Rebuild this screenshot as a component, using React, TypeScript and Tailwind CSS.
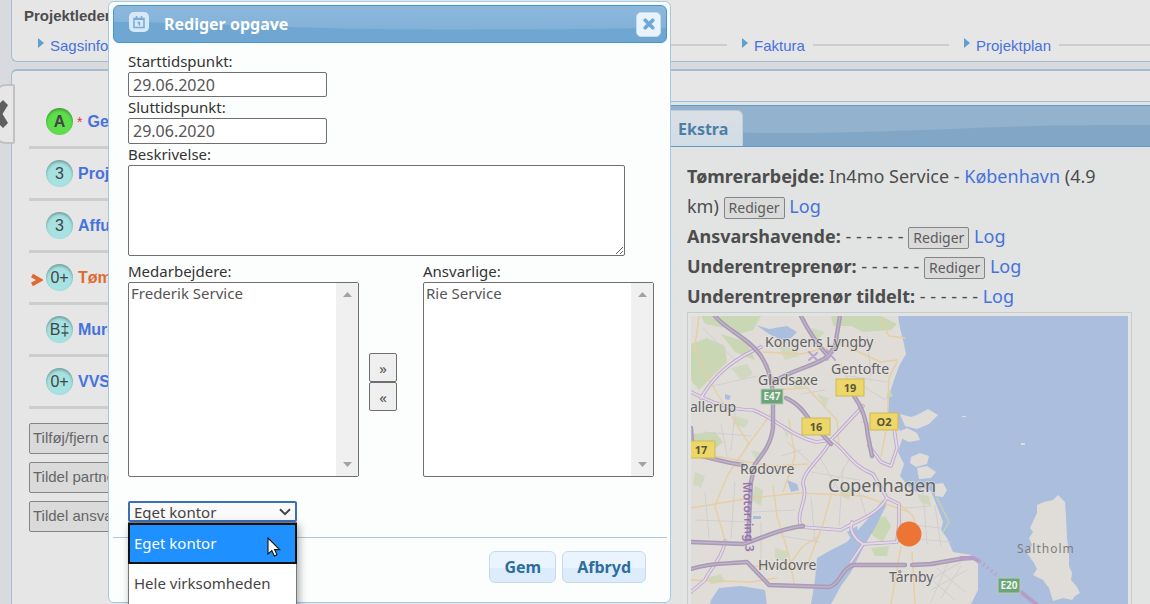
import { useState } from 'react'

const tasks = [
  { code: 'A', name: 'Ge', required: true, done: true },
  { code: '3', name: 'Proj' },
  { code: '3', name: 'Affu' },
  { code: '0+', name: 'Tøm', active: true },
  { code: 'B‡', name: 'Mure' },
  { code: '0+', name: 'VVS' },
]

const sideActions = ['Tilføj/fjern o', 'Tildel partne', 'Tildel ansva']

const details = [
  { label: 'Ansvarshavende:', editable: true },
  { label: 'Underentreprenør:', editable: true },
  { label: 'Underentreprenør tildelt:', editable: false },
]

function NavItem({ label, className }: { label: string; className: string }) {
  return (
    <li className={`flex h-5 items-center ${className}`}>
      <svg className="mb-1 h-[10px] w-[6px] shrink-0" viewBox="0 0 6 10">
        <path d="M0 0 L6 5 L0 10 Z" fill="#5f9fd0" />
      </svg>
      <a href="#" className="ml-1.5 mr-2 pt-0.5 text-[15px] leading-5 text-[#4672dd]">{label}</a>
      <span className="h-[2px] flex-1 bg-[#cccdcd]" />
    </li>
  )
}

function EditButton() {
  return (
    <button className="h-[22px] rounded-[2px] border border-[#858585] bg-[#dadada] px-1 align-baseline text-sm leading-5 text-[#5c5c5c]">
      Rediger
    </button>
  )
}

function ListBox({ id, label, items }: { id: string; label: string; items: string[] }) {
  return (
    <div className="w-[231px] shrink-0">
      <label htmlFor={id} className="block leading-[21px]">{label}</label>
      <div className="flex h-[195px] rounded-[2px] border border-[#6f6f6f] bg-white">
        <select id={id} multiple className="min-w-0 flex-1 appearance-none overflow-hidden px-px text-[#555] outline-none">
          {items.map((item) => (
            <option key={item} className="p-0 px-px leading-5">{item}</option>
          ))}
        </select>
        <div className="flex w-[22px] flex-col items-center justify-between bg-[#f0f0f0] py-[9px]">
          <svg className="h-[5px] w-[9px]" viewBox="0 0 9 5"><path d="M0 5 L4.5 0 L9 5 Z" fill="#a3a3a3" /></svg>
          <svg className="h-[5px] w-[9px]" viewBox="0 0 9 5"><path d="M0 0 L4.5 5 L9 0 Z" fill="#a3a3a3" /></svg>
        </div>
      </div>
    </div>
  )
}

const motorways = [
  'M24 0 C35 14 58 22 70 40 C79 54 82 68 82 84 L82 112 C80 128 72 138 64 148 L60 166 L57 226',
  'M110 0 C118 16 128 30 137 40 C126 50 104 52 82 66',
  'M149 0 L144 30 L137 40',
  'M95 82 C108 88 114 97 120 106 L140 128',
  'M0 112 L2 138 C20 142 35 147 52 149',
  'M163 80 C172 92 176 108 177 120 L181 140',
  'M0 226 L52 228 C72 222 90 212 112 210',
  'M0 253 C20 246 40 248 56 246 L78 269 L138 271 C150 268 150 252 163 249 L214 249',
  'M221 249 L240 248 C254 246 268 242 281 242',
]

const primaryRoads = [
  'M70 31 C45 42 25 56 10 82 M0 76 C18 85 38 94 62 94 C84 102 100 120 125 126 L140 124 L172 90',
  'M140 124 C132 142 112 154 112 168 C118 184 104 196 110 211 L150 214 C162 206 186 200 196 182 L182 158 C160 150 154 132 140 124',
  'M196 182 L208 188 L208 206 L206 226 L172 228 C162 222 158 212 161 206',
  'M203 112 L206 132 L200 150 L190 146 L178 130',
  'M172 228 L160 246 M34 225 C32 242 18 254 14 264 L0 276',
]

const localRoads = [
  'M8 0 L4 30 L14 58 L34 90 L58 128 L36 160 L24 190 L34 224',
  'M0 192 L60 182 L108 177 L172 180 L218 196',
  'M70 36 L110 38 L150 28 L190 46 L206 44',
  'M188 0 L198 20 L214 22 M206 46 L198 62 L196 110 L190 140',
  'M80 74 L116 72 L146 104 L148 130',
  'M82 170 L86 200 L98 240 L104 272 M140 180 L132 208 L116 250',
  'M60 250 L96 252 L112 230 L128 220',
  'M0 264 L60 266 L86 262 M24 140 L80 150 L116 148',
  'M206 186 L222 200 L228 222 M210 230 L200 288 M221 236 L224 288',
  'M98 104 L104 140 L92 176 M150 48 L164 80 M56 130 L80 98',
]

const lanes = [
  'M12 12 L44 44 M22 70 L66 60 M12 116 L60 120 M30 108 L36 140 M44 96 L40 134',
  'M96 126 L126 152 M90 140 L110 134 M120 156 L168 164 M128 140 L150 178 M160 140 L140 176',
  'M4 204 L56 206 M14 176 L18 222 M44 166 L40 222 M62 196 L104 194 M70 206 L70 254',
  'M90 220 L128 226 M120 182 L124 226 M152 152 L148 210 M166 170 L176 202',
  'M214 192 L240 190 M212 208 L250 212 M214 222 L260 226 M232 176 L236 228 M244 190 L250 230',
  'M236 266 L270 246 M240 274 L276 254 M250 282 L270 250 M234 258 L264 284 M246 252 L274 276 M240 286 L258 244',
  'M158 60 L196 66 M176 20 L180 60 M172 70 L194 84 M170 106 L196 112 M110 78 L134 74',
]

const places = [
  { name: 'Kongens Lyngby', x: 74, y: 31, size: 14 },
  { name: 'Gentofte', x: 140, y: 58, size: 14 },
  { name: 'Gladsaxe', x: 67, y: 69, size: 14 },
  { name: 'allerup', x: -1, y: 96, size: 14 },
  { name: 'Rødovre', x: 49, y: 158, size: 14 },
  { name: 'Copenhagen', x: 137, y: 176, size: 18 },
  { name: 'Hvidovre', x: 67, y: 254, size: 14 },
  { name: 'Tårnby', x: 198, y: 266, size: 14 },
]

const shields = [
  { text: '19', x: 145, y: 63, w: 28 },
  { text: '16', x: 111, y: 102, w: 28 },
  { text: 'O2', x: 179, y: 97, w: 28 },
  { text: '17', x: -4, y: 125, w: 28 },
]

const euroShields = [
  { text: 'E47', x: 70, y: 73 },
  { text: 'E20', x: 307, y: 262 },
]

function AreaMap() {
  return (
    <svg className="block w-full" viewBox="0 0 437 330" fontFamily="'Noto Sans', sans-serif">
      <rect width="437" height="330" fill="#abbedd" />
      {/* Land */}
      <g fill="#e0ddd9">
        <path d="M0 0 H207 L209 12 L213 28 L215 38 L208 50 L203 64 L198 80 L197 98 L204 106 L212 120 L207 136 L213 148 L209 160 L218 171 L226 176 L232 172 L240 175 L246 190 L252 206 L250 214 L256 222 L262 236 L280 239 L287 248 L287 274 L279 290 L270 330 H0 Z" />
        <path d="M209 98 L220 101 L226 99 L237 93 L247 99 L238 108 L226 113 L214 110 Z" />
        <path d="M220 141 L229 137 L238 140 L236 148 L225 151 L219 147 Z M226 152 L236 150 L245 156 L240 162 L228 163 Z M244 168 L252 167 L256 174 L252 181 L244 180 Z" />
        <path d="M207 116 L216 112 L226 117 L229 124 L218 126 L210 122 Z M271 100 h4 v1 h-4 Z M330 127 h4 v2 h-4 Z" />
        <path d="M346 189 L353 186 L362 184 L367 179 L374 186 L375 201 L376 222 L378 237 L378 250 L381 257 L380 264 L386 271 L389 277 L384 280 L381 284 L372 282 L362 285 L358 272 L352 264 L342 259 L346 253 L343 247 L336 237 L341 229 L338 222 L342 216 L339 212 L346 197 Z" />
      </g>
      {/* Parks */}
      <g fill="#c9d7b4">
        <path d="M10 0 H70 L62 14 L48 18 L34 12 L14 8 Z M0 28 L16 22 L34 30 L36 46 L22 60 L8 74 L0 64 Z" />
        <path d="M140 0 H190 L206 8 L200 14 L172 16 L160 10 L142 10 Z M30 18 L56 26 L64 44 L44 36 Z" />
        <path d="M2 118 L24 116 L32 126 L22 134 L4 130 Z M178 206 L194 200 L200 210 L192 226 L182 220 Z M180 232 L198 230 L196 240 L184 240 Z" />
        <path d="M150 170 L160 172 L158 184 L150 180 Z M198 72 L202 80 L194 84 Z M64 170 L72 174 L70 190 L60 184 Z M120 12 L134 16 L126 24 Z" opacity=".8" />
        <path d="M100 64 L112 62 L116 70 L104 72 Z M226 178 L238 180 L240 190 L230 186 Z M16 262 L30 258 L34 266 L20 268 Z" opacity=".8" />
        <path d="M40 52 L56 48 L62 58 L50 64 Z M88 30 L104 30 L108 40 L94 44 Z M44 100 L58 104 L54 112 L42 108 Z M90 108 L100 112 L96 122 Z M4 156 L14 160 L10 172 L2 168 Z M84 232 L98 236 L94 246 L84 242 Z M126 78 L138 82 L134 92 Z M60 134 L74 138 L66 146 Z" opacity=".7" />
      </g>
      {/* Lakes and harbour */}
      <g fill="#abbedd">
        <path d="M65 9 L78 13 L96 10 L106 16 L100 22 L90 24 L78 18 Z M96 164 L106 168 L108 174 L100 176 Z M34 78 L40 80 L38 84 L34 83 Z" />
        <path d="M192 184 L196 188 L184 212 L172 232 L160 256 L150 270 L140 288 L138 330 H114 L120 288 L124 264 L126 242 L140 234 L156 226 L176 204 Z" />
        <path d="M20 284 L28 272 L50 270 L74 274 L76 290 L72 330 H8 Z M156 216 L166 210 L168 224 L162 226 Z M62 200 h8 v3 h-8 Z" />
      </g>
      <g fill="none" strokeLinecap="round" strokeLinejoin="round">
        {lanes.map((d) => <path key={d} d={d} stroke="#d0ced0" strokeWidth="1" />)}
        {localRoads.map((d) => <path key={d} d={d} stroke="#e6cea3" strokeWidth="1.4" />)}
        {primaryRoads.map((d) => <path key={d} d={d} stroke="#bca9ca" strokeWidth="3.6" />)}
        {primaryRoads.map((d) => <path key={d} d={d} stroke="#e4d9e6" strokeWidth="1.8" />)}
        {motorways.map((d) => <path key={d} d={d} stroke="#a99bb5" strokeWidth="4.4" />)}
        {motorways.map((d) => <path key={d} d={d} stroke="#bfb2c9" strokeWidth="1.4" />)}
        <path d="M270 242 L282 242 L288 245" stroke="#b79bc9" strokeWidth="4" />
        <path d="M288 245 L308 261" stroke="#b9a7cb" strokeWidth="4" strokeDasharray="2 3" strokeLinecap="butt" />
        <path d="M330 276 L350 292" stroke="#b49ec6" strokeWidth="4" />
        <path d="M118 36 L126 44 M118 44 L126 37 M136 34 L144 44 M136 44 L144 34" stroke="#b9a3cc" strokeWidth="2" />
        <path d="M246 182 L258 206 L252 216" stroke="#c4d5ac" strokeWidth="1.4" />
      </g>
      {/* Labels */}
      <text transform="translate(52 166) rotate(88)" fontSize="12" fontWeight="600" fill="#9873ae">Motorring 3</text>
      {places.map((p) => (
        <text key={p.name} x={p.x} y={p.y} fontSize={p.size} fill="#626262" stroke="#e6e3e0" strokeWidth="2" strokeOpacity=".6" paintOrder="stroke">
          {p.name}
        </text>
      ))}
      <text x="326" y="237" fontSize="12" letterSpacing="1" fill="#7d7d7d">Saltholm</text>
      {shields.map((s) => (
        <g key={s.text}>
          <rect x={s.x} y={s.y} width={s.w} height="17" fill="#ecd768" stroke="#cdb95c" />
          <text x={s.x + s.w / 2} y={s.y + 13} fontSize="11" fontWeight="700" textAnchor="middle" fill="#5d563a">{s.text}</text>
        </g>
      ))}
      {euroShields.map((s) => (
        <g key={s.text}>
          <rect x={s.x} y={s.y} width="22" height="15" fill="#6ca378" stroke="#b7cdb5" />
          <text x={s.x + 11} y={s.y + 11} fontSize="10" fontWeight="700" textAnchor="middle" fill="#ecf3ec">{s.text}</text>
        </g>
      ))}
      <circle cx="218" cy="218" r="12.5" fill="#ec7434" />
    </svg>
  )
}

function EditDialog() {
  const [start, setStart] = useState('29.06.2020')
  const [end, setEnd] = useState('29.06.2020')
  const [scope, setScope] = useState('Eget kontor')

  return (
    <div
      role="dialog"
      aria-labelledby="dialog-title"
      className="absolute left-[108px] top-[1px] w-[563px] rounded-md border border-[#a6c9e2] bg-[#fcfefd] p-[3px] pl-1 text-[15px] text-[#333]"
    >
      {/* Title bar */}
      <div className="relative flex h-[38px] items-center overflow-hidden rounded-md border border-[#4297d7] bg-[#6fa6d2] pl-[15px] pr-[5px]">
        <svg className="absolute inset-0 h-full w-full" viewBox="0 0 554 38" preserveAspectRatio="none">
          <defs>
            <linearGradient id="gloss" x1="0" y1="0" x2="0" y2="1">
              <stop offset="0" stopColor="#8db8dc" />
              <stop offset="1" stopColor="#82b1d8" />
            </linearGradient>
          </defs>
          <path d="M0 17 C90 17 180 25 330 25 C440 25 500 24 554 23 V0 H0 Z" fill="url(#gloss)" />
        </svg>
        <svg className="relative mb-1 h-5 w-5" viewBox="0 0 20 20">
          <rect width="20" height="20" rx="5" fill="#d7e8f7" />
          <path d="M5 6.5 H15 V15.5 H5 Z M7.5 4 V7 M12.5 4 V7" fill="none" stroke="#79add8" strokeWidth="1.6" />
          <path d="M5 6 H15 V8 H5 Z" fill="#79add8" />
          <path d="M8.6 10.6 H10.4 V13.4 M10.4 10 V13.6" fill="none" stroke="#79add8" strokeWidth="1.6" />
        </svg>
        <h2 id="dialog-title" className="relative ml-[15px] flex-1 text-base font-bold text-white">Rediger opgave</h2>
        <button aria-label="Luk" className="relative flex h-[25px] w-[25px] items-center justify-center rounded-[5px] border border-[#c5dbec] bg-[#e9f3fd]">
          <svg className="h-3 w-3" viewBox="0 0 12 12">
            <path d="M2.2 2.2 L9.8 9.8 M9.8 2.2 L2.2 9.8" stroke="#6da8d6" strokeWidth="3.6" strokeLinecap="round" />
          </svg>
        </button>
      </div>

      {/* Form */}
      <div className="px-[15px] pt-2">
        <label htmlFor="start" className="block leading-[21px]">Starttidspunkt:</label>
        <input id="start" value={start} onChange={(e) => setStart(e.target.value)} className="block h-[25px] w-[199px] rounded-[2px] border border-[#6f6f6f] bg-white px-1 text-base text-[#555]" />
        <label htmlFor="end" className="block leading-[21px]">Sluttidspunkt:</label>
        <input id="end" value={end} onChange={(e) => setEnd(e.target.value)} className="block h-[26px] w-[199px] rounded-[2px] border border-[#6f6f6f] bg-white px-1 text-base text-[#555]" />
        <label htmlFor="description" className="block leading-[21px]">Beskrivelse:</label>
        <textarea id="description" className="block h-[91px] w-[497px] rounded-[2px] border border-[#6f6f6f] bg-white" />

        <div className="mt-[5px] flex">
          <ListBox id="employees" label="Medarbejdere:" items={['Frederik Service']} />
          <div className="ml-[10px] mr-[26px] mt-[92px] flex w-7 shrink-0 flex-col text-[#555]">
            <button aria-label="Tilføj" className="h-[29px] rounded-[2px] border border-[#6f6f6f] bg-[#efefef] leading-5">»</button>
            <button aria-label="Fjern" className="h-[29px] rounded-[2px] border border-[#6f6f6f] bg-[#efefef] leading-5">«</button>
          </div>
          <ListBox id="responsible" label="Ansvarlige:" items={['Rie Service']} />
        </div>

        <div className="relative mt-6 w-[169px]">
          <select
            aria-label="Kontor"
            value={scope}
            onChange={(e) => setScope(e.target.value)}
            className="block h-[21px] w-full appearance-none rounded-[2px] border-2 border-[#3d6fb8] bg-[#fafafa] pl-1 leading-4 text-[#444] outline-none"
          >
            <option>Eget kontor</option>
            <option>Hele virksomheden</option>
          </select>
          <svg className="pointer-events-none absolute right-[6px] top-[7px] h-2 w-3" viewBox="0 0 12 8">
            <path d="M1 1.2 L6 6.2 L11 1.2" fill="none" stroke="#444" strokeWidth="2" />
          </svg>
          <ul role="listbox" className="absolute left-0 top-full z-10 w-full border border-[#777] bg-white pb-3 text-[#444] shadow-[2px_3px_8px_rgba(0,0,0,0.35)]">
            <li role="option" aria-selected="true" className="-mx-px flex h-[41px] items-center border-2 border-[#111] bg-[#1e90ff] pl-1 text-white">
              Eget kontor
            </li>
            <li role="option" aria-selected="false" className="flex h-[39px] items-center pl-[5px]">Hele virksomheden</li>
          </ul>
          <svg className="absolute left-[139px] top-[36px] z-20 h-5 w-[14px]" viewBox="0 0 14 20">
            <path d="M1 1 V17 L4.8 13.6 L7.4 19 L10 17.8 L7.6 12.6 H12.6 Z" fill="#fff" stroke="#111" strokeWidth="1.1" />
          </svg>
        </div>
      </div>

      {/* Button pane */}
      <div className="mt-[15px] flex justify-end gap-1.5 border-t border-[#a6c9e2] pb-4 pr-[21px] pt-[13px] text-base font-bold text-[#2e6e9e]">
        <button className="h-8 rounded-md border border-[#c5dbec] bg-linear-to-b from-[#e9f4fe] from-55% to-[#dcecfb] to-55% px-[14px]">Gem</button>
        <button className="h-8 rounded-md border border-[#c5dbec] bg-linear-to-b from-[#e9f4fe] from-55% to-[#dcecfb] to-55% px-[14px]">Afbryd</button>
      </div>
    </div>
  )
}

export default function App() {
  return (
    <div className="relative h-screen overflow-hidden bg-[#d9dade] pl-[11px] font-['Noto_Sans',sans-serif] text-[#4d4d4d]">
      {/* Project header */}
      <header className="rounded-bl-md border-b border-l border-[#a3bcd0] bg-[#e6e6e6] pb-1.5 pl-3 pt-1.5 font-['Liberation_Sans',sans-serif]">
        <p className="text-[15px] font-bold leading-5">Projektleder</p>
        <nav>
          <ul className="mt-[9px] flex pl-[14px]">
            <NavItem label="Sagsinfo" className="mr-[15px] w-[689px] shrink-0" />
            <NavItem label="Faktura" className="mr-[15px] w-[207px] shrink-0" />
            <NavItem label="Projektplan" className="flex-1" />
          </ul>
        </nav>
      </header>

      <div className="mt-[7px] flex h-full rounded-tl-md border-l border-t-2 border-[#a3bcd0] bg-[#e6e6e6]">
        {/* Task list */}
        <aside className="w-[640px] shrink-0 pl-[17px] pt-[26px] font-['Liberation_Sans',sans-serif]">
          <ul>
            {tasks.map((task) => (
              <li key={task.name} className="relative flex h-[52px] items-center border-b-[3px] border-[#cdcdcd] pl-[17px]">
                {task.active && (
                  <svg className="absolute left-[2px] top-[20px] h-[14px] w-3" viewBox="0 0 12 14">
                    <path d="M1 2.5 L9 7 L1 11.5" fill="none" stroke="#dd6b32" strokeWidth="4" />
                  </svg>
                )}
                <span
                  className={`flex h-[27px] w-[27px] items-center justify-center rounded-full text-base text-[#444] inset-shadow-[0_2px_3px_rgba(0,0,0,0.3)] ${
                    task.done ? 'bg-[#5ede4d] font-bold' : 'bg-[#a5e2e1]'
                  }`}
                >
                  {task.code}
                </span>
                {task.required && <span className="ml-1 text-sm text-[#e8303a]">*</span>}
                <a href="#" className={`ml-[5px] text-base font-bold ${task.active ? 'text-[#dd6b32]' : 'text-[#4672dd]'}`}>
                  {task.name}
                </a>
              </li>
            ))}
          </ul>
          <div className="mt-[14px] flex w-[200px] flex-col gap-2">
            {sideActions.map((action) => (
              <button key={action} className="h-[31px] rounded-[2px] border border-[#858585] bg-[#dadada] pl-[3px] text-left text-[15px] text-[#666]">
                {action}
              </button>
            ))}
          </div>
        </aside>

        {/* Task details */}
        <main className="min-w-0 flex-1 bg-[#e2e4e3]">
          <div className="h-[31px] border-b border-[#a3bcd0] bg-[#e6e6e6]" />
          <div className="relative mt-[3px] flex h-[42px] items-end border-y border-[#5f9bc8] bg-[#82a7c6] pl-1">
            <svg className="absolute inset-0 h-full w-full" viewBox="0 0 498 40" preserveAspectRatio="none">
              <path d="M0 22 C100 30 190 27 300 23 C380 19 440 19 498 19 V0 H0 Z" fill="#92b2cd" />
            </svg>
            <a href="#" className="relative flex h-9 items-center rounded-t-md border border-b-0 border-[#c0cfdc] bg-linear-to-b from-[#dadfe4] to-[#d1dce6] pl-[21px] pr-[14px] text-base font-bold text-[#4d7fa6]">
              Ekstra
            </a>
          </div>
          <div className="pl-[35px] pr-[18px] pt-[14px]">
            <p className="text-lg leading-[30px]">
              <b>Tømrerarbejde:</b> In4mo Service - <a href="#" className="text-[#4672dd]">København</a> (4.9 {'km)'} <EditButton />{' '}
              <a href="#" className="text-[#4672dd]">Log</a>
            </p>
            {details.map((row) => (
              <p key={row.label} className="text-lg leading-[30px]">
                <b>{row.label}</b> - - - - - - {row.editable && <EditButton />} <a href="#" className="text-[#4672dd]">Log</a>
              </p>
            ))}
            <div className="mt-px border border-[#c8cccb] p-[3px]">
              <AreaMap />
            </div>
          </div>
        </main>
      </div>

      {/* Sidebar handle */}
      <button aria-label="Skjul menu" className="absolute -left-1.5 top-[84px] h-[60px] w-[21px] rounded-l-xl rounded-r-xs border-2 border-[#c2c2c2] bg-[#e6e6e6] pl-1">
        <svg className="h-7 w-2" viewBox="0 0 8 28">
          <path d="M0 3 L3 0 L8 5 L2.5 14 L8 23 L3 28 L0 25 Z" fill="#5e5e5e" />
        </svg>
      </button>

      <EditDialog />
    </div>
  )
}
